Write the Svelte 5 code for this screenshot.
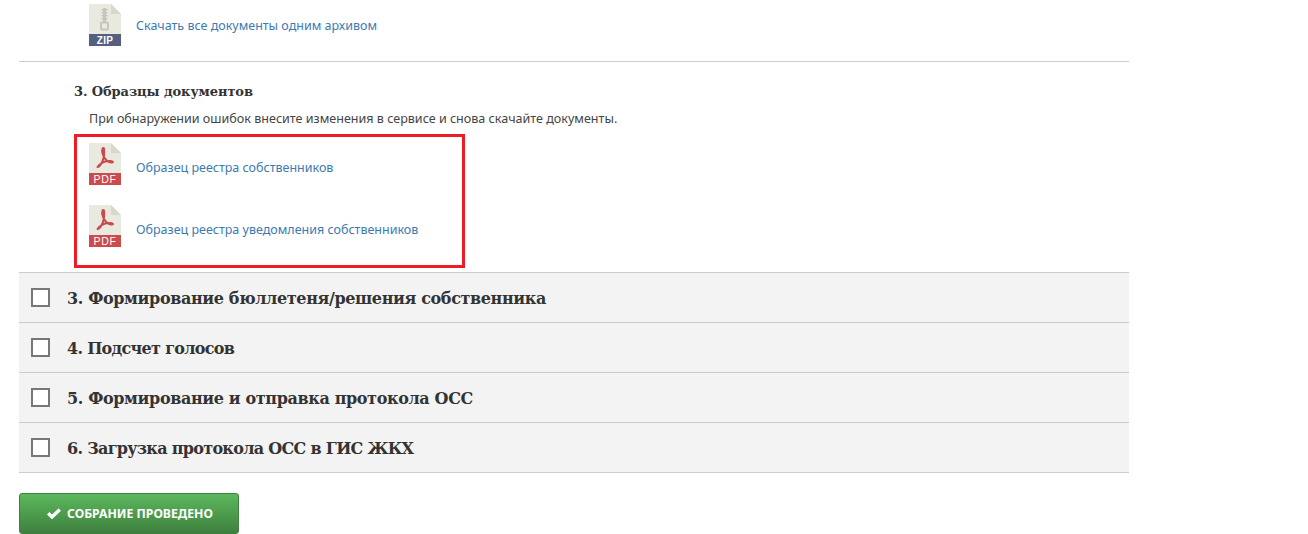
<script>
	const samples = ['Образец реестра собственников', 'Образец реестра уведомления собственников'];
	const steps = [
		{ title: '3. Формирование бюллетеня/решения собственника' },
		{ title: '4. Подсчет голосов', tight: true },
		{ title: '5. Формирование и отправка протокола ОСС' },
		{ title: '6. Загрузка протокола ОСС в ГИС ЖКХ', tight: true }
	];
</script>

{#snippet fileIcon(kind, color)}
	<svg class="file-icon" width="32" height="42" viewBox="0 0 32 42">
		<path d="M0 0H22L32 10V30H0Z" fill="#e9e9e0" />
		<path d="M22 0L32 10H22Z" fill="#d9d7ca" />
		{#if kind === 'PDF'}
			<path
				d="M13.5 5.5c-.8 2.500 .5 7 2.500 10 2.200 3.200 5.500 4.500 8 3.500 -1 -1.500 -7 -1.500 -11 .8 -2 1.200 -4 2.700 -4.500 4.200 1.800 .5 3.500 -2.300 5 -5.800 1.300 -3 2 -8 1.500 -12.700 -.5 -.8 -1.300 -.8 -1.500 0Z"
				fill="none"
				stroke="#c94a4b"
				stroke-width="2"
				stroke-linejoin="round"
			/>
		{:else}
			<g fill="#c8c6b8">
				<rect x="12.5" y="5" width="6" height="1.5" />
				<rect x="12.5" y="8" width="6" height="1.5" />
				<rect x="12.5" y="11" width="6" height="1.5" />
				<rect x="12.5" y="14" width="6" height="1.5" />
				<rect x="14" y="4" width="3" height="14" />
			</g>
			<rect x="12" y="18.5" width="7" height="7" rx="1" fill="none" stroke="#c8c6b8" stroke-width="2" />
		{/if}
		<rect y="30" width="32" height="12" fill={color} />
		<text x="16" y="40" text-anchor="middle" class="file-label" class:thin={kind === 'PDF'}>{kind}</text>
	</svg>
{/snippet}

<div class="page">
	<a class="doc archive" href="#zip">
		{@render fileIcon('ZIP', '#556080')}
		<span>Скачать все документы одним архивом</span>
	</a>

	<section class="samples">
		<h3>3. Образцы документов</h3>
		<p>При обнаружении ошибок внесите изменения в сервисе и снова скачайте документы.</p>
		<div class="highlight">
			{#each samples as name}
				<a class="doc" href="#pdf">
					{@render fileIcon('PDF', '#cc4b4c')}
					<span class="name">{name}</span>
				</a>
			{/each}
		</div>
	</section>

	<ul class="steps">
		{#each steps as step}
			<li>
				<span class="box"></span>
				<span class="title" class:tight={step.tight}>{step.title}</span>
			</li>
		{/each}
	</ul>

	<button class="done" type="button">
		<svg width="14" height="11" viewBox="0 0 14 11">
			<path d="M1.2 5.2L5 9L12.8 1.6" fill="none" stroke="#fff" stroke-width="3.4" />
		</svg>
		СОБРАНИЕ ПРОВЕДЕНО
	</button>
</div>

<style>
	:global(body) {
		background: #fff;
		overflow: hidden;
	}

	.page {
		width: 1110px;
		margin-left: 19px;
		height: 534px;
		font-family: 'Noto Sans', 'Open Sans', sans-serif;
		font-size: 13px;
		color: #444;
	}

	.doc {
		display: flex;
		align-items: center;
		gap: 15px;
		color: #3d7ab0;
		text-decoration: none;
		font-size: 12.5px;
	}

	.name {
		margin-top: 6px;
	}

	.archive {
		padding: 4px 0 15px 70px;
		border-bottom: 1px solid #ccc;
	}

	.file-icon {
		flex: none;
		display: block;
	}

	.file-label {
		font-family: 'Liberation Sans', sans-serif;
		font-size: 10px;
		font-weight: 700;
		letter-spacing: 0.3px;
		fill: #fff;
	}

	.file-label.thin {
		font-weight: 400;
		font-size: 10.5px;
		letter-spacing: 0.7px;
	}

	.samples {
		padding: 21px 0 0 55px;
	}

	h3 {
		margin: 0;
		font-family: 'DejaVu Serif', serif;
		font-size: 13px;
		font-weight: 700;
		line-height: 17px;
		letter-spacing: -0.1px;
		color: #333;
	}

	p {
		margin: 10px 0 7px 15px;
		font-size: 12.55px;
		line-height: 17px;
	}

	.highlight {
		box-sizing: border-box;
		width: 391px;
		height: 134px;
		border: 3px solid #ee1c25;
		padding: 6px 0 0 12px;
		display: flex;
		flex-direction: column;
		gap: 20px;
	}

	.steps {
		list-style: none;
		margin: 4px 0 0;
		padding: 0;
		border-top: 1px solid #ccc;
	}

	.steps li {
		display: flex;
		align-items: center;
		gap: 17px;
		box-sizing: border-box;
		height: 50px;
		padding-left: 12px;
		background: #f3f3f3;
		border-bottom: 1px solid #ccc;
	}

	.box {
		box-sizing: border-box;
		width: 19px;
		height: 19px;
		background: #fff;
		border: 2px solid #777;
	}

	.title {
		margin-top: 1px;
		font-family: 'DejaVu Serif', serif;
		font-weight: 700;
		font-size: 16px;
		letter-spacing: -0.37px;
		color: #333;
	}

	.title.tight {
		letter-spacing: -0.7px;
	}

	.done {
		display: flex;
		align-items: center;
		justify-content: center;
		gap: 6px;
		box-sizing: border-box;
		width: 220px;
		height: 41px;
		margin-top: 20px;
		padding: 0 0 0 2px;
		border: 1px solid #3f7f3f;
		border-radius: 3px;
		background: linear-gradient(#5cb85c, #3e803e);
		color: #fff;
		font-family: 'Noto Sans', sans-serif;
		font-size: 12.2px;
		font-weight: 700;
	}
</style>
